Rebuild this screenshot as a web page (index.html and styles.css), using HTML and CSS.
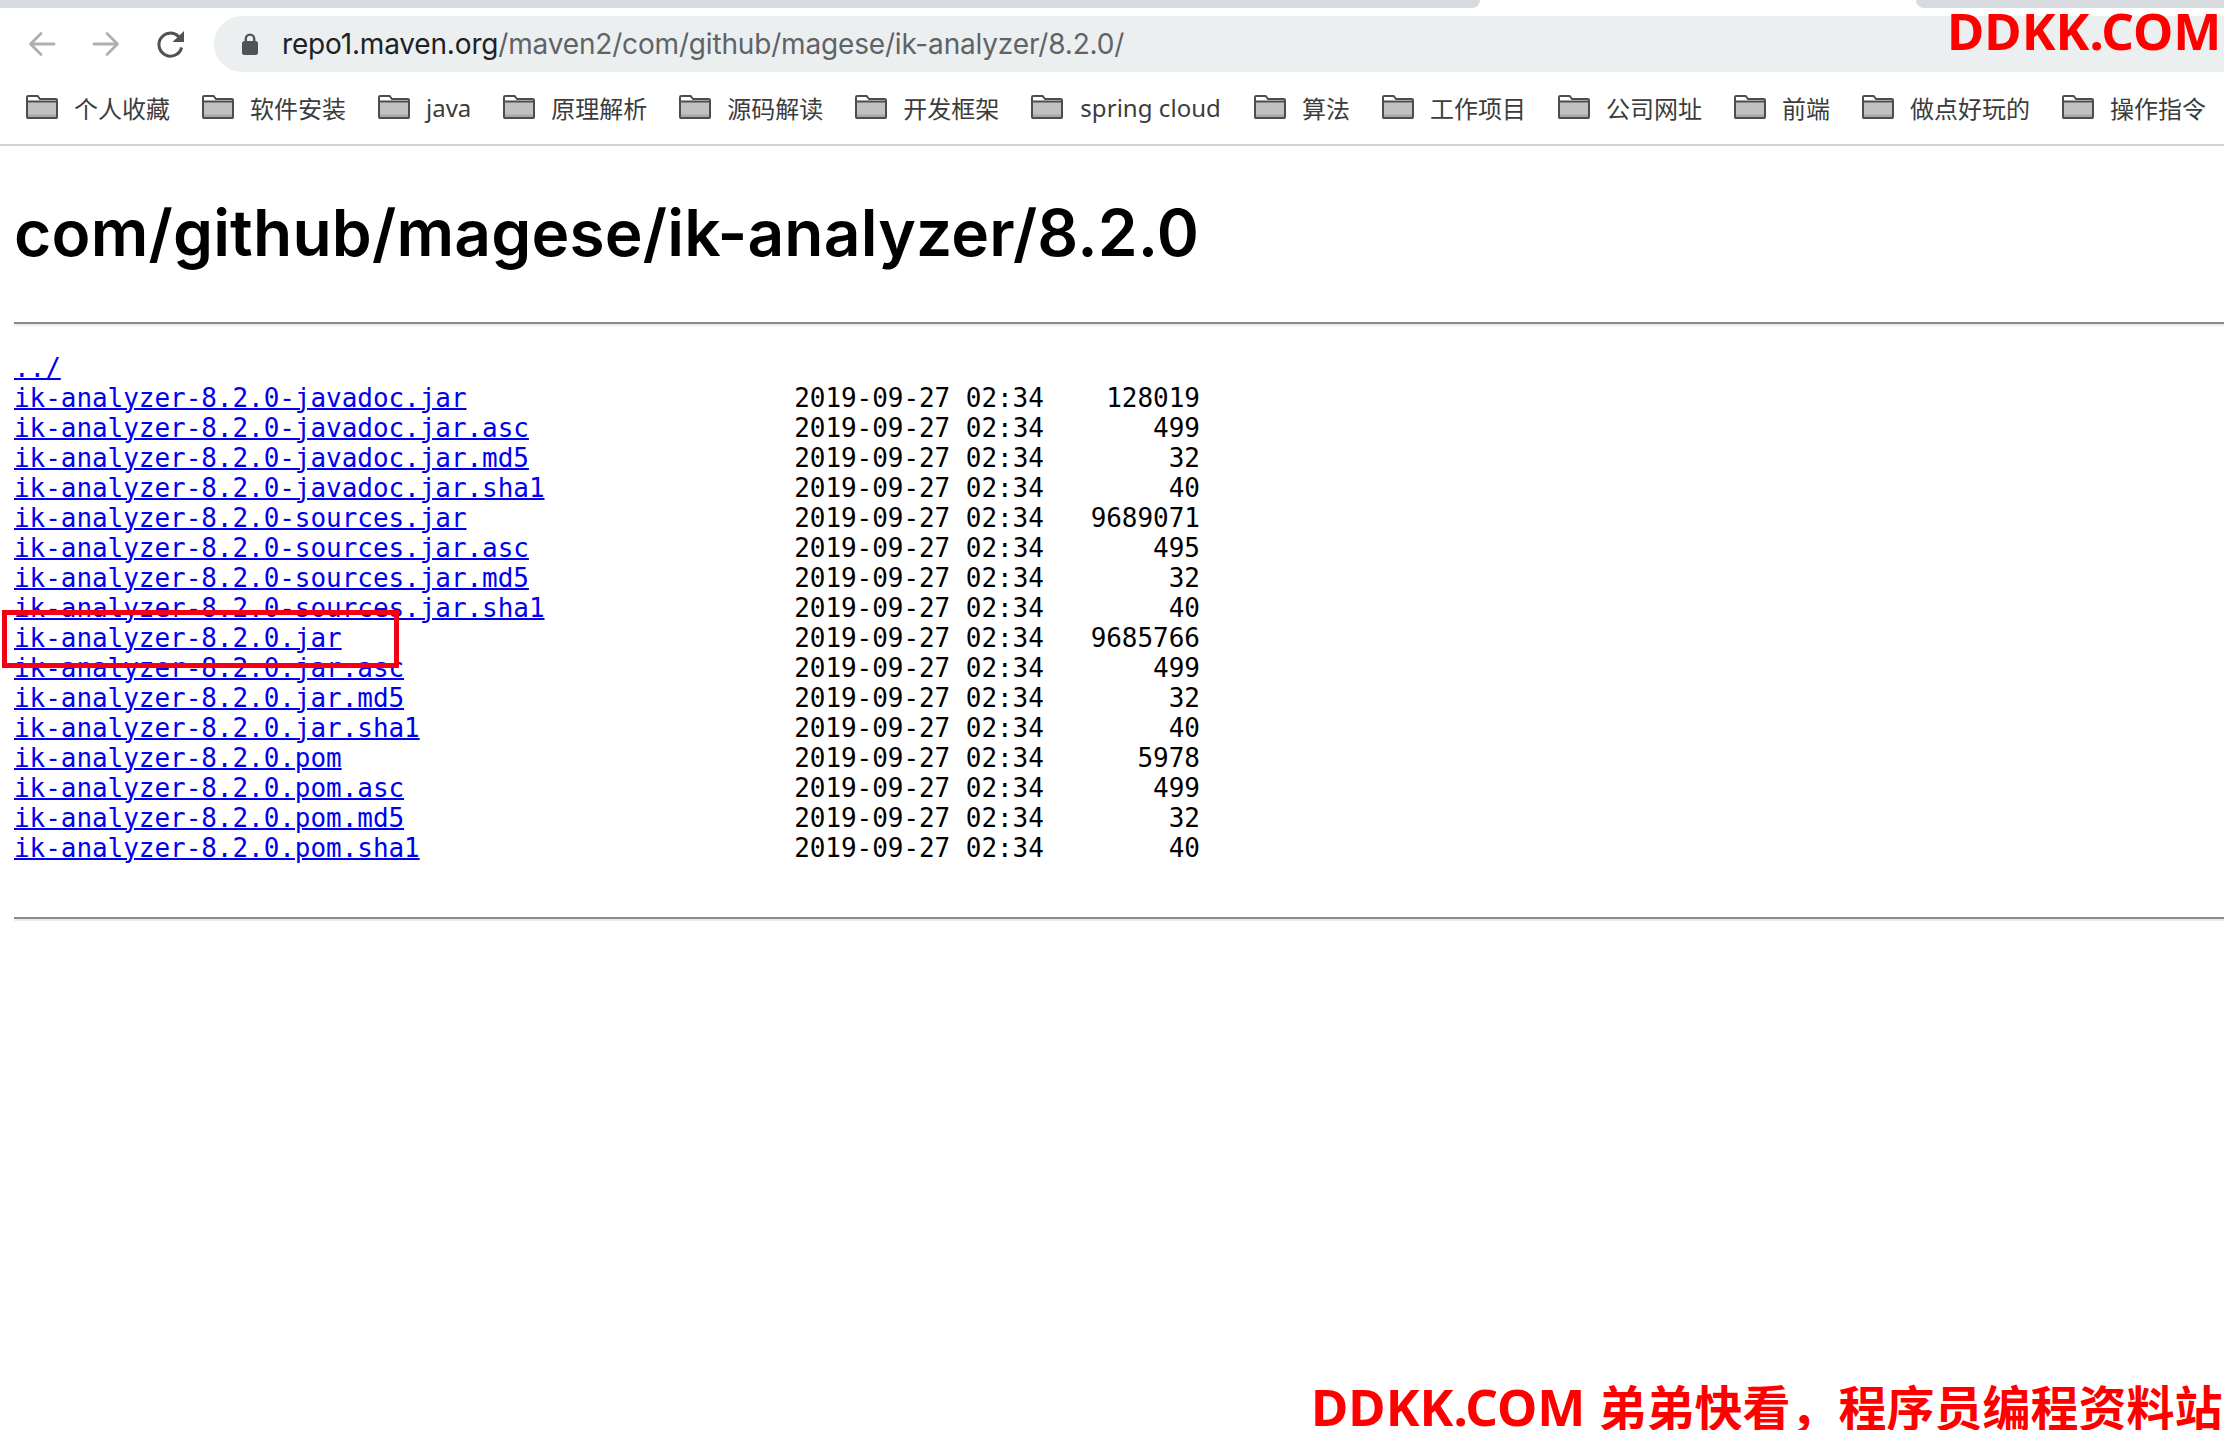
FILE: index.html
```html
<!DOCTYPE html>
<html lang="zh">
<head>
<meta charset="utf-8">
<title>Index of /maven2/com/github/magese/ik-analyzer/8.2.0/</title>
<link rel="stylesheet" href="styles.css">
</head>
<body>
<svg class="defs" width="0" height="0" aria-hidden="true">
  <symbol id="folder" viewBox="0 0 32 24">
    <path d="M1.200 23V2.200q0-1.200 1.200-1.200h9.200l2.400 3h16.600q1.200 0 1.200 1.200V23z" fill="#fff"/>
    <rect x="1" y="7" width="30" height="16" fill="#c1c1c1"/>
    <rect x="1" y="19.500" width="30" height="3.500" fill="#a9a9a9"/>
    <path d="M1 22.200V2.200Q1 1 2.200 1h9.400l2.400 3h15.800Q31 4 31 5.200v17q0 .8-.8.8H1.800q-.8 0-.8-.8zM1 6.500h30" fill="none" stroke="#4d4d4d" stroke-width="2"/>
  </symbol>
</svg>
<div class="tabstrip"><div class="tab tab-left"></div><div class="tab tab-right"></div></div>
<header class="toolbar">
  <svg class="nav-icon" width="28" height="28" viewBox="0 0 28 28"><path d="M26 14H3M13 3.500 2.500 14 13 24.500" fill="none" stroke="#adb0b3" stroke-width="2.800" stroke-linecap="round" stroke-linejoin="round"/></svg>
  <svg class="nav-icon" width="28" height="28" viewBox="0 0 28 28"><path d="M2 14h23M15 3.500 25.500 14 15 24.500" fill="none" stroke="#adb0b3" stroke-width="2.800" stroke-linecap="round" stroke-linejoin="round"/></svg>
  <svg class="nav-icon reload" width="30" height="30" viewBox="0 0 30 30"><path d="M25.600 18.500a11.500 11.500 0 1 1-3.200-11.200L25 10" fill="none" stroke="#4f5256" stroke-width="3"/><path d="M28 2v11H16.500z" fill="#4f5256"/></svg>
  <div class="omnibox">
    <svg class="lock" width="18" height="24" viewBox="0 0 18 24"><path d="M4.800 11V6.800a4.200 4.200 0 0 1 8.400 0V11" fill="none" stroke="#505357" stroke-width="2.400"/><rect x="1" y="9" width="16" height="14" rx="2.500" fill="#505357"/></svg>
    <span class="url"><span class="host">repo1.maven.org</span>/maven2/com/github/magese/ik-analyzer/8.2.0/</span>
  </div>
</header>
<nav class="bookmarks">
  <a class="bm"><svg class="folder"><use href="#folder"/></svg>个人收藏</a>
  <a class="bm"><svg class="folder"><use href="#folder"/></svg>软件安装</a>
  <a class="bm"><svg class="folder"><use href="#folder"/></svg>java</a>
  <a class="bm"><svg class="folder"><use href="#folder"/></svg>原理解析</a>
  <a class="bm"><svg class="folder"><use href="#folder"/></svg>源码解读</a>
  <a class="bm"><svg class="folder"><use href="#folder"/></svg>开发框架</a>
  <a class="bm bm-wide"><svg class="folder"><use href="#folder"/></svg>spring cloud</a>
  <a class="bm"><svg class="folder"><use href="#folder"/></svg>算法</a>
  <a class="bm"><svg class="folder"><use href="#folder"/></svg>工作项目</a>
  <a class="bm"><svg class="folder"><use href="#folder"/></svg>公司网址</a>
  <a class="bm"><svg class="folder"><use href="#folder"/></svg>前端</a>
  <a class="bm"><svg class="folder"><use href="#folder"/></svg>做点好玩的</a>
  <a class="bm"><svg class="folder"><use href="#folder"/></svg>操作指令</a>
</nav>
<main class="page">
  <h1 class="title">com/github/magese/ik-analyzer/8.2.0</h1>
  <hr class="rule rule-top">
  <pre class="listing"><a href="#">../</a>
<a href="#">ik-analyzer-8.2.0-javadoc.jar</a>                     2019-09-27 02:34    128019
<a href="#">ik-analyzer-8.2.0-javadoc.jar.asc</a>                 2019-09-27 02:34       499
<a href="#">ik-analyzer-8.2.0-javadoc.jar.md5</a>                 2019-09-27 02:34        32
<a href="#">ik-analyzer-8.2.0-javadoc.jar.sha1</a>                2019-09-27 02:34        40
<a href="#">ik-analyzer-8.2.0-sources.jar</a>                     2019-09-27 02:34   9689071
<a href="#">ik-analyzer-8.2.0-sources.jar.asc</a>                 2019-09-27 02:34       495
<a href="#">ik-analyzer-8.2.0-sources.jar.md5</a>                 2019-09-27 02:34        32
<a href="#">ik-analyzer-8.2.0-sources.jar.sha1</a>                2019-09-27 02:34        40
<a href="#">ik-analyzer-8.2.0.jar</a>                             2019-09-27 02:34   9685766
<a href="#">ik-analyzer-8.2.0.jar.asc</a>                         2019-09-27 02:34       499
<a href="#">ik-analyzer-8.2.0.jar.md5</a>                         2019-09-27 02:34        32
<a href="#">ik-analyzer-8.2.0.jar.sha1</a>                        2019-09-27 02:34        40
<a href="#">ik-analyzer-8.2.0.pom</a>                             2019-09-27 02:34      5978
<a href="#">ik-analyzer-8.2.0.pom.asc</a>                         2019-09-27 02:34       499
<a href="#">ik-analyzer-8.2.0.pom.md5</a>                         2019-09-27 02:34        32
<a href="#">ik-analyzer-8.2.0.pom.sha1</a>                        2019-09-27 02:34        40</pre>
  <hr class="rule rule-bottom">
</main>
<div class="highlight"></div>
<div class="mark mark-top">DDKK.COM</div>
<div class="mark mark-bottom">DDKK.COM <span class="mark-cjk">弟弟快看，程序员编程资料站</span></div>
</body>
</html>
```
FILE: styles.css
```css
* { box-sizing: border-box; }
html, body { margin: 0; padding: 0; background: #fff; }
body { width: 2224px; height: 1430px; overflow: hidden; position: relative; font-family: "Liberation Sans", "Noto Sans CJK SC", sans-serif; }
.defs { position: absolute; }
.tabstrip { height: 8px; display: flex; justify-content: space-between; }
.tab { height: 8px; background: #d7dbdf; }
.tab-left { width: 1480px; border-bottom-right-radius: 10px; }
.tab-right { width: 308px; border-bottom-left-radius: 10px; }
.toolbar { height: 64px; padding-top: 8px; display: flex; align-items: center; padding-left: 28px; }
.nav-icon { flex: none; margin-right: 36px; }
.nav-icon.reload { margin-right: 28px; }
.omnibox { flex: 1; height: 56px; background: #ebeff0; border-radius: 28px 0 0 28px; display: flex; align-items: center; padding-left: 27px; }
.lock { flex: none; margin-right: 23px; }
.url { font-family: "Inter", "Liberation Sans", sans-serif; font-size: 28px; letter-spacing: -.17px; color: #5f6368; white-space: nowrap; }
.host { color: #202124; }
.bookmarks { height: 74px; border-bottom: 2px solid #d3d3d3; display: flex; align-items: center; gap: 32px; padding: 0 0 2px 26px; overflow: hidden; }
.bm { display: flex; align-items: center; gap: 16px; font-size: 24px; color: #3c3c3c; white-space: nowrap; font-family: "Noto Sans", "Noto Sans CJK SC", sans-serif; flex: none; }
.bm-wide { letter-spacing: .05px; gap: 17px; padding-right: 1px; }
.folder { width: 32px; height: 24px; flex: none; }
.page { padding: 0 0 0 14px; }
.title { font-family: "Inter", "Liberation Sans", sans-serif; font-weight: 600; font-size: 64px; line-height: 74px; letter-spacing: .2px; margin: 50px 0 0; color: #000; white-space: nowrap; }
.rule { margin: 0; border: 0; border-top: 2px solid #8a8a8a; border-bottom: 2px solid #ececec; height: 4px; }
.rule-top { margin-top: 52px; }
.rule-bottom { margin-top: 54px; }
.listing { margin: 27px 0 0; font-family: "DejaVu Sans Mono", monospace; font-size: 26px; line-height: 30px; letter-spacing: -.05px; color: #000; }
.listing a { color: #0000ee; text-decoration: underline; text-decoration-thickness: 2px; }
.highlight { position: absolute; left: 2px; top: 610px; width: 397px; height: 58px; border: 5px solid #f40012; }
.mark { position: absolute; color: #f00; font-family: "Noto Sans", "Noto Sans CJK SC", sans-serif; font-weight: 700; font-size: 51px; line-height: 48px; white-space: nowrap; }
.mark-cjk { font-size: 48px; }
.mark-top { left: 1947px; top: 6px; }
.mark-bottom { left: 1311px; top: 1382px; }
```
